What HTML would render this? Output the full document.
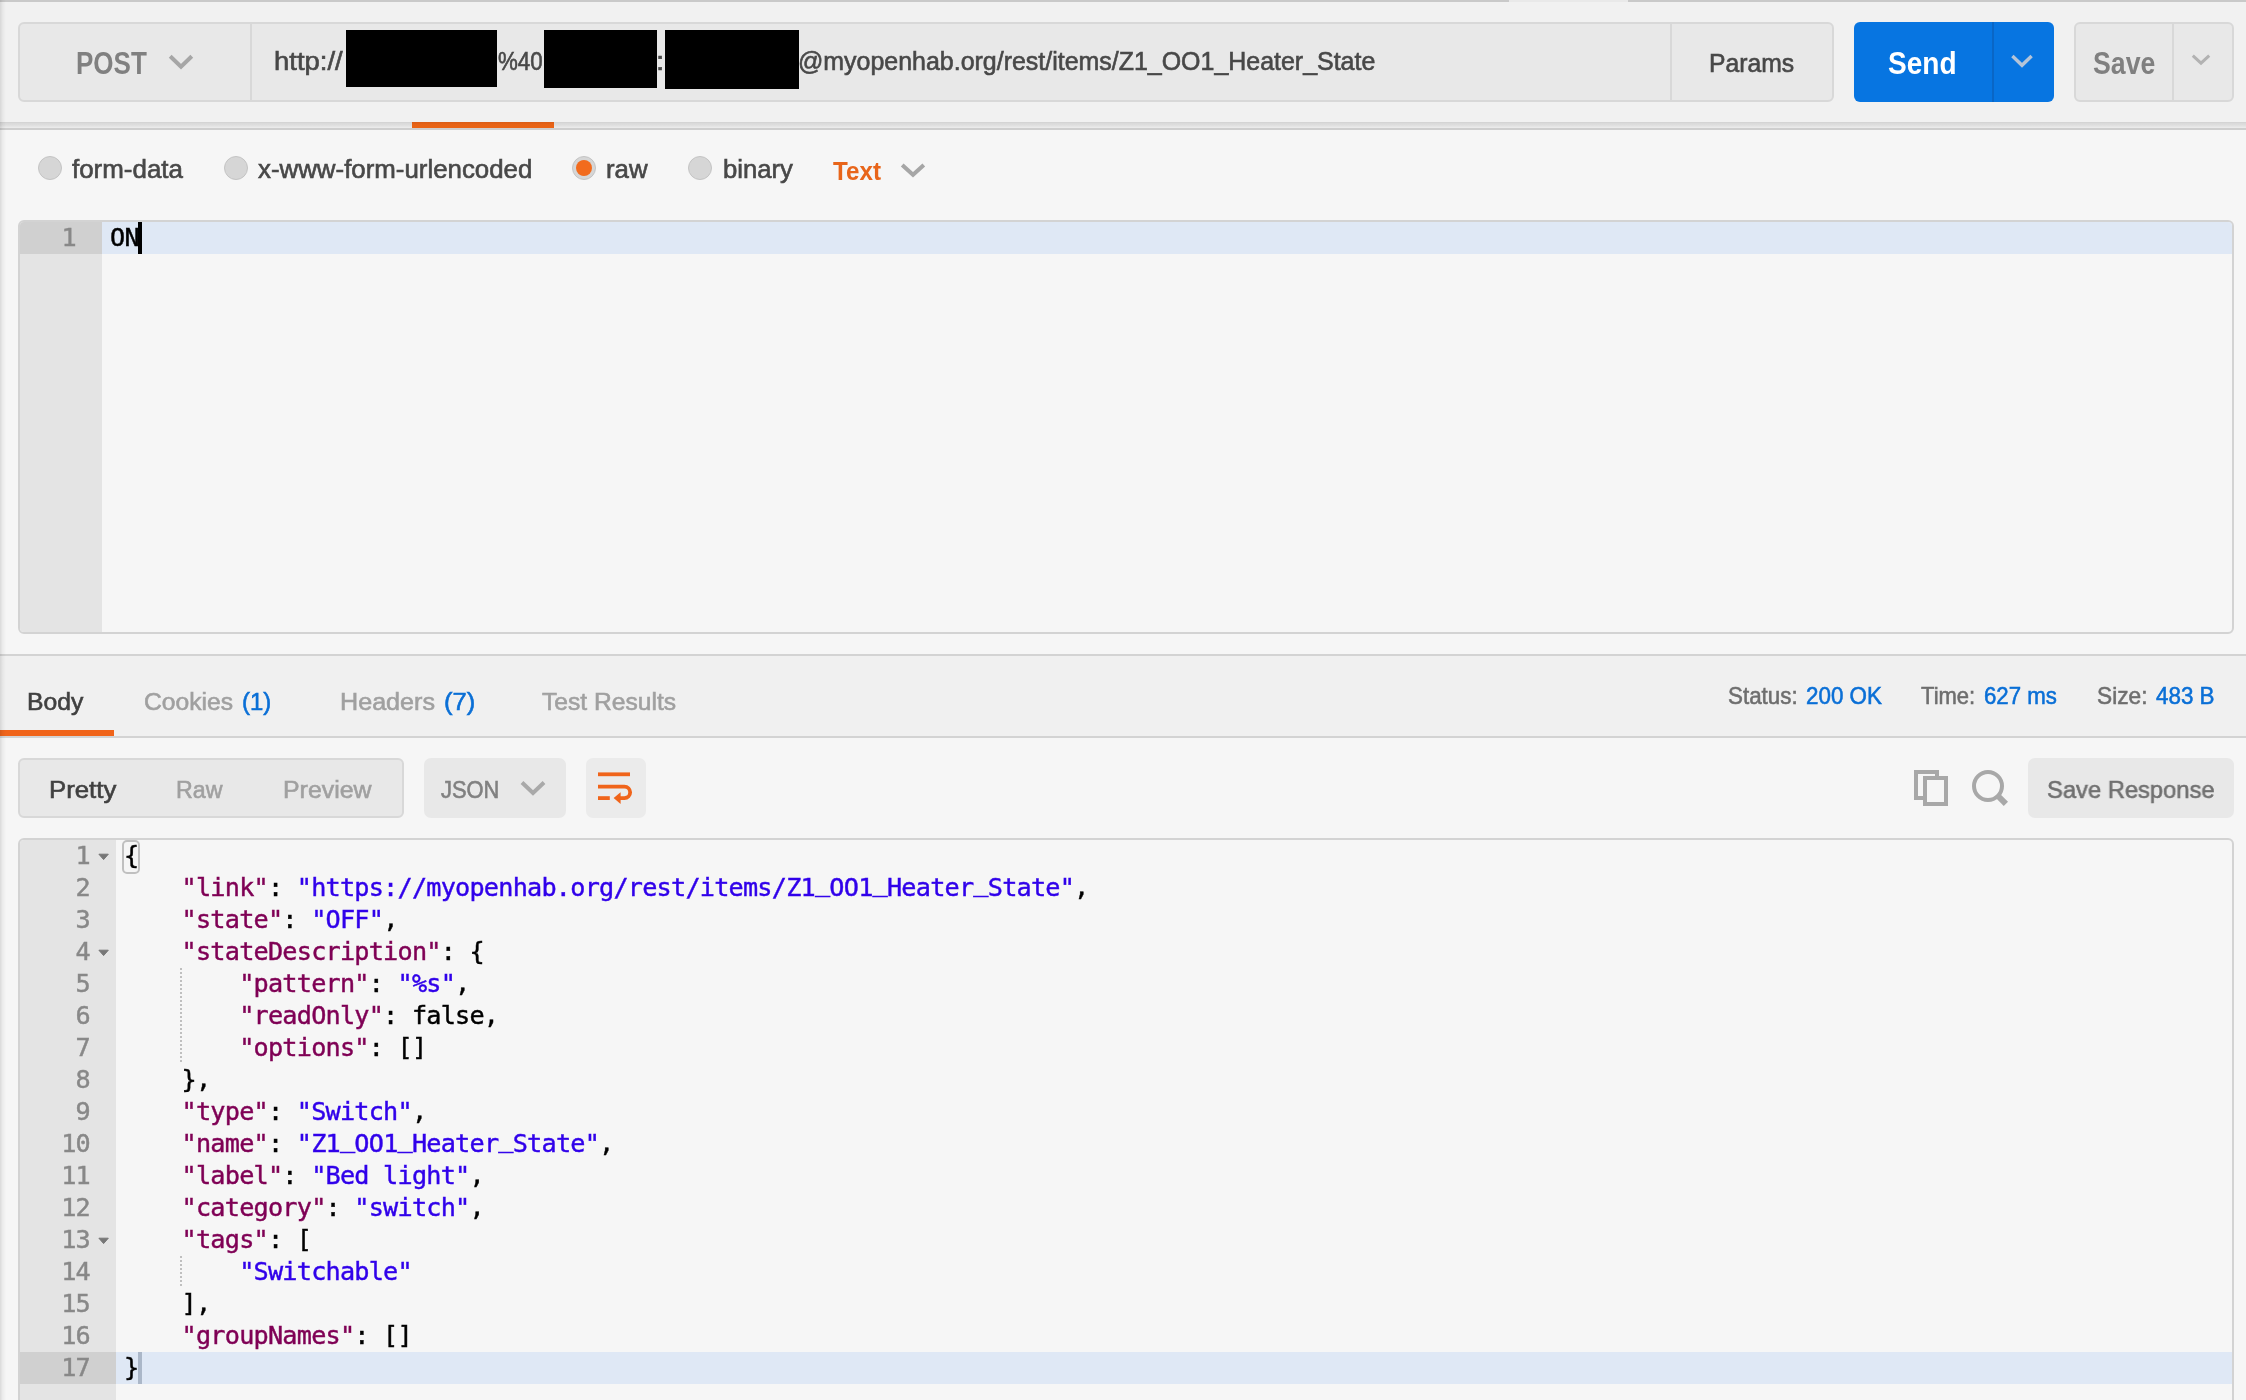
<!DOCTYPE html>
<html lang="en">
<head>
<meta charset="utf-8">
<title>Postman</title>
<style>
*{box-sizing:border-box;margin:0;padding:0}
html,body{width:2246px;height:1400px;overflow:hidden;background:#f6f6f6}
#root{position:absolute;left:0;top:0;width:2246px;height:1400px;will-change:transform}
body{position:relative;font-family:"Liberation Sans",sans-serif;color:#484848;-webkit-font-smoothing:antialiased}
.abs{position:absolute}
.t{position:absolute;white-space:nowrap;line-height:1;transform-origin:0 0;-webkit-text-stroke:0.6px currentColor}
/* top request bar */
#topbar{left:0;top:0;width:2246px;height:122px;background:#f1f1f1}
#topline{left:0;top:0;width:2246px;height:2px;background:linear-gradient(90deg,#c9c9c9 1509px,#e9e9e9 1509px,#e9e9e9 1628px,#c9c9c9 1628px)}
#lshade{left:0;top:0;width:6px;height:1400px;background:linear-gradient(90deg,rgba(0,0,0,.11),rgba(0,0,0,.04) 45%,rgba(0,0,0,0))}
#band{left:0;top:122px;width:2246px;height:8px;background:linear-gradient(#cfcfcf 0,#d9d9d9 1px,#dedede 3px,#ececec 6px,#cecece 6px,#cecece 8px)}
#tabmark{left:412px;top:122px;width:142px;height:6px;background:linear-gradient(#d95d18,#e86316 45%,#ea6415)}
#urlbox{left:18px;top:22px;width:1816px;height:80px;background:#e8e8e8;border:2px solid #d8d8d8;border-radius:6px}
.vdiv{position:absolute;width:2px;background:#d8d8d8}
.blk{position:absolute;background:#000}
#send{left:1854px;top:22px;width:200px;height:80px;background:#0775e1;border-radius:6px}
#savebox{left:2074px;top:22px;width:160px;height:80px;background:#e8e8e8;border:2px solid #d8d8d8;border-radius:6px}
/* radios */
.radio{position:absolute;width:24px;height:24px;border-radius:50%;background:#d6d6d6;border:1.5px solid #c3c3c3}
.radio.on::after{content:"";position:absolute;left:2.5px;top:2.5px;width:16px;height:16px;border-radius:50%;background:#f26b1d}
/* editors */
.editor{position:absolute;border:2px solid #d3d3d3;border-radius:6px;background:#f6f6f6;overflow:hidden}
.gutter{position:absolute;left:0;top:0;bottom:0;background:#e4e4e4}
.mono{font-family:"DejaVu Sans Mono","Liberation Mono",monospace;font-size:25.2px;letter-spacing:-0.77px;-webkit-text-stroke:0.45px currentColor}
.ln{position:absolute;white-space:nowrap;line-height:32px;height:32px}
.u{position:relative;top:-5px}
.k{color:#7f0055}.s{color:#3000ea}.p{color:#000}

.rt{font-size:24.6px}
.st{font-size:23.4px;-webkit-text-stroke:0.55px currentColor}
.num{left:0;width:70px;text-align:right;color:#888}
.code{left:104px;color:#000}
.guide{width:2px;background-image:linear-gradient(#bfbfbf 50%,transparent 50%);background-size:2px 4px}
.fold{left:77.5px;fill:#777;stroke:#777;stroke-width:1;stroke-linejoin:round}
</style>
</head>
<body>
<div id="root">
<div id="topbar" class="abs"></div>
<div id="topline" class="abs"></div>
<div id="band" class="abs"></div>
<div id="tabmark" class="abs"></div>

<div id="urlbox" class="abs"></div>
<div class="vdiv" style="left:250px;top:24px;height:76px"></div>
<div class="vdiv" style="left:1670px;top:24px;height:76px"></div>
<div class="t" id="post" style="left:76.0px;top:47.8px;transform:scaleX(0.851);-webkit-text-stroke:0;font-size:30.6px;font-weight:bold;color:#808080">POST</div>
<svg class="abs" style="left:167px;top:53px" width="28" height="18" viewBox="0 0 28 18"><path d="M3.2 3.2 L14 13.6 L24.8 3.2" fill="none" stroke="#a6a6a6" stroke-width="4"/></svg>
<div class="t" id="u1" style="left:274.3px;top:48.8px;transform:scaleX(1.098);font-size:25px">http://</div>
<div class="t" id="u2" style="left:498.3px;top:48.8px;transform:scaleX(0.893);font-size:25px">%40</div>
<div class="t" id="u3" style="left:656.1px;top:48.8px;transform:scaleX(1.191);font-size:25px">:</div>
<div class="t" id="u4" style="left:798.2px;top:48.8px;transform:scaleX(0.998);font-size:25px">@myopenhab.org/rest/items/Z1_OO1_Heater_State</div>
<div class="blk" style="left:346px;top:30px;width:151px;height:57px"></div>
<div class="blk" style="left:544px;top:30px;width:113px;height:58px"></div>
<div class="blk" style="left:665px;top:30px;width:134px;height:59px"></div>
<div class="t" id="params" style="left:1709.0px;top:50.9px;transform:scaleX(0.988);font-size:25px">Params</div>

<div id="send" class="abs"></div>
<div class="vdiv" style="left:1992px;top:22px;height:80px;background:#0966c6"></div>
<div class="t" id="sendt" style="left:1888.4px;top:47.8px;transform:scaleX(0.917);-webkit-text-stroke:0;font-size:30.6px;font-weight:bold;color:#fff">Send</div>
<svg class="abs" style="left:2010px;top:53px" width="24" height="16" viewBox="0 0 24 16"><path d="M2.4 3 L12 12.3 L21.6 3" fill="none" stroke="#b4c4d8" stroke-width="3.4"/></svg>

<div id="savebox" class="abs"></div>
<div class="vdiv" style="left:2172px;top:24px;height:76px"></div>
<div class="t" id="savet" style="left:2092.7px;top:47.6px;transform:scaleX(0.872);-webkit-text-stroke:0;font-size:30.6px;font-weight:bold;color:#808080">Save</div>
<svg class="abs" style="left:2191px;top:53px" width="22" height="14" viewBox="0 0 22 14"><path d="M1.8 2.6 L10 10.2 L18.2 2.6" fill="none" stroke="#b2b2b2" stroke-width="3"/></svg>

<!-- body type radios -->
<div class="radio" style="left:38px;top:156px"></div>
<div class="t" id="r1" style="left:72.0px;top:156.7px;transform:scaleX(1.037);font-size:25px">form-data</div>
<div class="radio" style="left:224px;top:156px"></div>
<div class="t" id="r2" style="left:258.0px;top:156.7px;transform:scaleX(1.034);font-size:25px">x-www-form-urlencoded</div>
<div class="radio on" style="left:572px;top:156px"></div>
<div class="t" id="r3" style="left:605.8px;top:156.7px;transform:scaleX(1.032);font-size:25px">raw</div>
<div class="radio" style="left:688px;top:156px"></div>
<div class="t" id="r4" style="left:722.6px;top:156.7px;transform:scaleX(1.027);font-size:25px">binary</div>
<div class="t" id="r5" style="left:833.4px;top:158.5px;transform:scaleX(0.969);-webkit-text-stroke:0;font-size:25px;font-weight:bold;color:#e8651a">Text</div>
<svg class="abs" style="left:900px;top:162px" width="26" height="17" viewBox="0 0 26 17"><path d="M2.2 3 L13 12.8 L23.8 3" fill="none" stroke="#a6a6a6" stroke-width="4"/></svg>

<!-- request editor -->
<div class="editor" id="ed1" style="left:18px;top:220px;width:2216px;height:414px">
  <div class="gutter" style="width:82px"></div>
  <div class="abs" style="left:0;top:0;width:82px;height:32px;background:#d0d0d0"></div>
  <div class="abs" style="left:82px;top:0;right:0;height:32px;background:#dfe8f5"></div>
  <div class="ln mono" style="left:0;top:0;width:56px;text-align:right;color:#888">1</div>
  <div class="ln mono p" style="left:90px;top:0">ON</div>
  <div class="abs" style="left:118px;top:0;width:4px;height:32px;background:#000"></div>
</div>


<!-- response header -->
<div class="abs" style="left:0;top:654px;width:2246px;height:84px;background:#f0f0f0;border-top:2px solid #d3d3d3;border-bottom:2px solid #d3d3d3"></div>
<div class="abs" style="left:0;top:730px;width:114px;height:6px;background:#f0641a"></div>
<div class="t rt" id="tb1" style="left:27.3px;top:690px;transform:scaleX(1.005);color:#404040">Body</div>
<div class="t rt" id="tb2" style="left:143.8px;top:690px;transform:scaleX(1.002);color:#a0a0a0">Cookies</div>
<div class="t rt" id="tb2n" style="left:241.9px;top:690px;transform:scaleX(0.972);color:#0a6fd6">(1)</div>
<div class="t rt" id="tb3" style="left:339.8px;top:690px;transform:scaleX(1.022);color:#a0a0a0">Headers</div>
<div class="t rt" id="tb3n" style="left:443.7px;top:690px;transform:scaleX(1.038);color:#0a6fd6">(7)</div>
<div class="t rt" id="tb4" style="left:542.0px;top:690px;transform:scaleX(1.001);color:#a0a0a0">Test Results</div>

<div class="t st" id="st1" style="left:1727.5px;top:685.3px;transform:scaleX(0.956);color:#6e6e6e">Status:</div>
<div class="t st" id="st2" style="left:1805.5px;top:685.3px;transform:scaleX(0.957);color:#0a6fd6">200 OK</div>
<div class="t st" id="st3" style="left:1921.2px;top:685.3px;transform:scaleX(0.941);color:#6e6e6e">Time:</div>
<div class="t st" id="st4" style="left:1983.9px;top:685.3px;transform:scaleX(0.951);color:#0a6fd6">627 ms</div>
<div class="t st" id="st5" style="left:2097.1px;top:685.3px;transform:scaleX(0.97);color:#6e6e6e">Size:</div>
<div class="t st" id="st6" style="left:2156.0px;top:685.3px;transform:scaleX(0.958);color:#0a6fd6">483 B</div>

<!-- response toolbar -->
<div class="abs" style="left:18px;top:758px;width:386px;height:60px;background:#e8e8e8;border:2px solid #d8d8d8;border-radius:6px"></div>
<div class="t rt" id="v1" style="left:48.7px;top:777.9px;transform:scaleX(1.048);color:#404040">Pretty</div>
<div class="t rt" id="v2" style="left:176.3px;top:777.9px;transform:scaleX(0.943);color:#a0a0a0">Raw</div>
<div class="t rt" id="v3" style="left:282.6px;top:777.9px;transform:scaleX(1.012);color:#a0a0a0">Preview</div>
<div class="abs" style="left:424px;top:758px;width:142px;height:60px;background:#e8e8e8;border-radius:7px"></div>
<div class="t rt" id="v4" style="left:441.2px;top:777.9px;transform:scaleX(0.891);color:#808080">JSON</div>
<svg class="abs" style="left:519px;top:779px" width="28" height="18" viewBox="0 0 28 18"><path d="M3 3.5 L14 14 L25 3.5" fill="none" stroke="#a9a9a9" stroke-width="4"/></svg>
<div class="abs" style="left:586px;top:758px;width:60px;height:60px;background:#ebebeb;border-radius:7px"></div>
<svg class="abs" style="left:586px;top:758px" width="60" height="60" viewBox="0 0 60 60"><g fill="none" stroke="#f0641a" stroke-width="3.8"><path d="M12 16.3H44"/><path d="M12 28.6H38.4A5.75 5.75 0 0 1 38.4 40.1H33"/><path d="M12 40.1H23.8"/></g><path d="M27.6 40.1L34.6 34.2V46z" fill="#f0641a"/></svg>

<svg class="abs" style="left:1912px;top:768px" width="40" height="40" viewBox="0 0 40 40"><g fill="none" stroke="#a8a8a8" stroke-width="4"><path d="M11 30H4V4H25V8"/><rect x="13" y="10" width="21" height="26" fill="#f6f6f6"/></g></svg>
<svg class="abs" style="left:1970px;top:768px" width="42" height="42" viewBox="0 0 42 42"><circle cx="18" cy="18" r="14" fill="none" stroke="#a8a8a8" stroke-width="4"/><path d="M28 28L35.9 35.9" stroke="#a8a8a8" stroke-width="6" fill="none"/></svg>
<div class="abs" style="left:2028px;top:758px;width:206px;height:60px;background:#e8e8e8;border-radius:7px"></div>
<div class="t rt" id="sr" style="left:2046.7px;top:777.9px;transform:scaleX(0.965);color:#707070">Save Response</div>

<!-- response editor -->
<div class="editor" id="ed2" style="left:18px;top:838px;width:2216px;height:600px">
  <div class="gutter" style="width:96px"></div>
  <div class="abs" style="left:0;top:512px;width:96px;height:32px;background:#d0d0d0"></div>
  <div class="abs" style="left:96px;top:512px;right:0;height:32px;background:#dfe8f5"></div>
  <div class="abs" style="left:102px;top:0;width:18px;height:34px;border:2px solid #c0c0c0;border-radius:5px"></div>
  <div class="abs guide" style="left:160px;top:128px;height:96px"></div>
  <div class="abs guide" style="left:160px;top:416px;height:32px"></div>
  <svg class="abs fold" style="top:13px" width="12" height="8" viewBox="0 0 12 8"><path d="M0.9 1.2H10.3L5.6 6.6z"/></svg>
  <svg class="abs fold" style="top:109px" width="12" height="8" viewBox="0 0 12 8"><path d="M0.9 1.2H10.3L5.6 6.6z"/></svg>
  <svg class="abs fold" style="top:397px" width="12" height="8" viewBox="0 0 12 8"><path d="M0.9 1.2H10.3L5.6 6.6z"/></svg>
  <div class="ln mono num" style="top:0px">1</div>
  <div class="ln mono code" id="L1" style="top:0px"><span class="p">{</span></div>
  <div class="ln mono num" style="top:32px">2</div>
  <div class="ln mono code" id="L2" style="top:32px">&nbsp;&nbsp;&nbsp;&nbsp;<span class="k">"link"</span><span class="p">: </span><span class="s">"https://myopenhab.org/rest/items/Z1<span class="u">_</span>OO1<span class="u">_</span>Heater<span class="u">_</span>State"</span><span class="p">,</span></div>
  <div class="ln mono num" style="top:64px">3</div>
  <div class="ln mono code" id="L3" style="top:64px">&nbsp;&nbsp;&nbsp;&nbsp;<span class="k">"state"</span><span class="p">: </span><span class="s">"OFF"</span><span class="p">,</span></div>
  <div class="ln mono num" style="top:96px">4</div>
  <div class="ln mono code" id="L4" style="top:96px">&nbsp;&nbsp;&nbsp;&nbsp;<span class="k">"stateDescription"</span><span class="p">: {</span></div>
  <div class="ln mono num" style="top:128px">5</div>
  <div class="ln mono code" id="L5" style="top:128px">&nbsp;&nbsp;&nbsp;&nbsp;&nbsp;&nbsp;&nbsp;&nbsp;<span class="k">"pattern"</span><span class="p">: </span><span class="s">"%s"</span><span class="p">,</span></div>
  <div class="ln mono num" style="top:160px">6</div>
  <div class="ln mono code" id="L6" style="top:160px">&nbsp;&nbsp;&nbsp;&nbsp;&nbsp;&nbsp;&nbsp;&nbsp;<span class="k">"readOnly"</span><span class="p">: false,</span></div>
  <div class="ln mono num" style="top:192px">7</div>
  <div class="ln mono code" id="L7" style="top:192px">&nbsp;&nbsp;&nbsp;&nbsp;&nbsp;&nbsp;&nbsp;&nbsp;<span class="k">"options"</span><span class="p">: []</span></div>
  <div class="ln mono num" style="top:224px">8</div>
  <div class="ln mono code" id="L8" style="top:224px">&nbsp;&nbsp;&nbsp;&nbsp;<span class="p">},</span></div>
  <div class="ln mono num" style="top:256px">9</div>
  <div class="ln mono code" id="L9" style="top:256px">&nbsp;&nbsp;&nbsp;&nbsp;<span class="k">"type"</span><span class="p">: </span><span class="s">"Switch"</span><span class="p">,</span></div>
  <div class="ln mono num" style="top:288px">10</div>
  <div class="ln mono code" id="L10" style="top:288px">&nbsp;&nbsp;&nbsp;&nbsp;<span class="k">"name"</span><span class="p">: </span><span class="s">"Z1<span class="u">_</span>OO1<span class="u">_</span>Heater<span class="u">_</span>State"</span><span class="p">,</span></div>
  <div class="ln mono num" style="top:320px">11</div>
  <div class="ln mono code" id="L11" style="top:320px">&nbsp;&nbsp;&nbsp;&nbsp;<span class="k">"label"</span><span class="p">: </span><span class="s">"Bed light"</span><span class="p">,</span></div>
  <div class="ln mono num" style="top:352px">12</div>
  <div class="ln mono code" id="L12" style="top:352px">&nbsp;&nbsp;&nbsp;&nbsp;<span class="k">"category"</span><span class="p">: </span><span class="s">"switch"</span><span class="p">,</span></div>
  <div class="ln mono num" style="top:384px">13</div>
  <div class="ln mono code" id="L13" style="top:384px">&nbsp;&nbsp;&nbsp;&nbsp;<span class="k">"tags"</span><span class="p">: [</span></div>
  <div class="ln mono num" style="top:416px">14</div>
  <div class="ln mono code" id="L14" style="top:416px">&nbsp;&nbsp;&nbsp;&nbsp;&nbsp;&nbsp;&nbsp;&nbsp;<span class="s">"Switchable"</span></div>
  <div class="ln mono num" style="top:448px">15</div>
  <div class="ln mono code" id="L15" style="top:448px">&nbsp;&nbsp;&nbsp;&nbsp;<span class="p">],</span></div>
  <div class="ln mono num" style="top:480px">16</div>
  <div class="ln mono code" id="L16" style="top:480px">&nbsp;&nbsp;&nbsp;&nbsp;<span class="k">"groupNames"</span><span class="p">: []</span></div>
  <div class="ln mono num" style="top:512px">17</div>
  <div class="ln mono code" id="L17" style="top:512px"><span class="p">}</span></div>
  <div class="abs" style="left:118px;top:512px;width:4px;height:32px;background:#abb7c8"></div>
</div>

<div id="lshade" class="abs"></div>
</div>
</body>
</html>
